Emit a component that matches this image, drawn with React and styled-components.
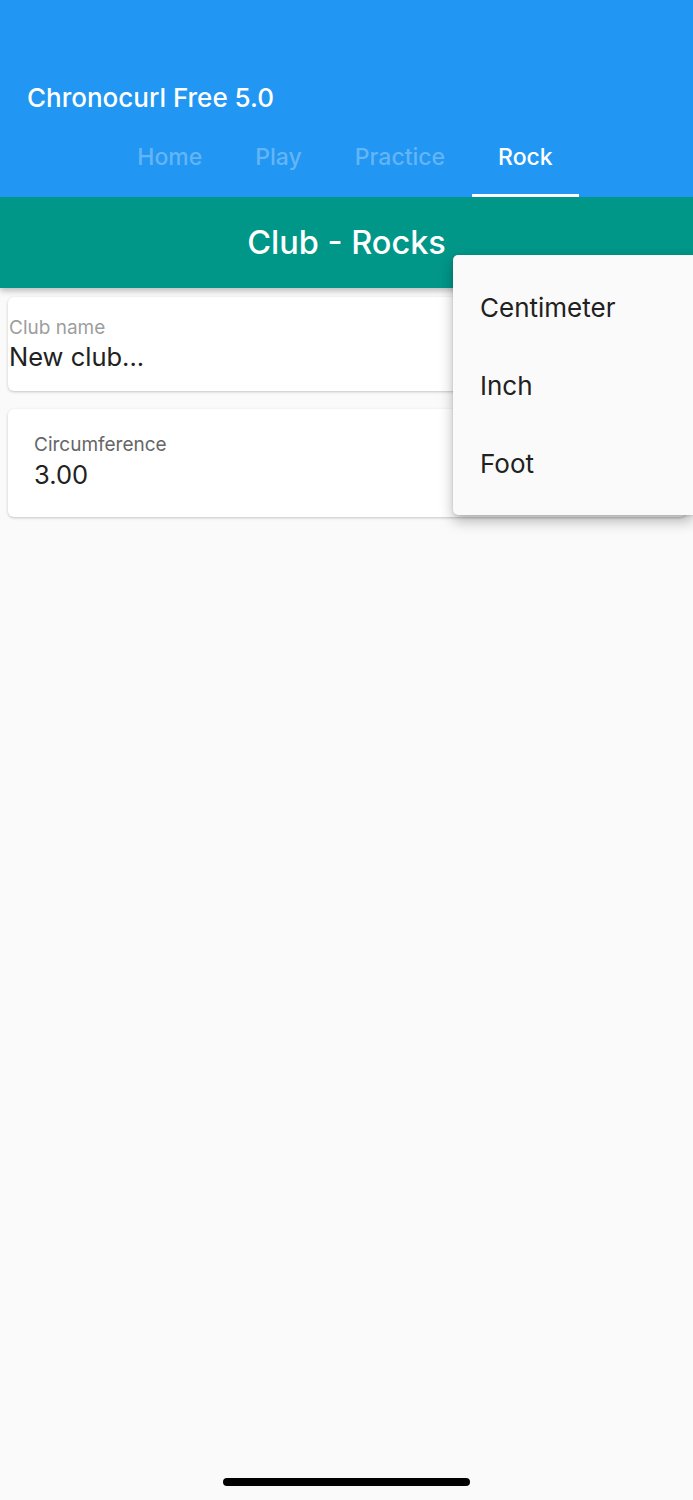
import React from 'react';
import styled, { createGlobalStyle } from 'styled-components';

const GlobalStyle = createGlobalStyle`
	html, body {
		margin: 0;
		padding: 0;
		background: #fafafa;
	}
	body {
		font-family: Inter, 'Noto Sans', sans-serif;
		-webkit-font-smoothing: antialiased;
	}
`;

const tabs = ['Home', 'Play', 'Practice', 'Rock'];
const units = ['Centimeter', 'Inch', 'Foot'];

const Screen = styled.div`
	position: relative;
	width: 693px;
	height: 1500px;
	overflow: hidden;
	background: #fafafa;
	display: flex;
	flex-direction: column;
`;

const AppBar = styled.header`
	background: #2196f3;
	padding-top: 74px;
	display: flex;
	flex-direction: column;
	position: relative;
	z-index: 2;
`;

const Title = styled.div`
	height: 46px;
	display: flex;
	align-items: center;
	padding-left: 27px;
	color: #fff;
	font-size: 26px;
	font-weight: 500;
`;

const TabRow = styled.nav`
	height: 77px;
	display: flex;
	justify-content: center;
	padding-right: 3px;
`;

const Tab = styled.div`
	padding: 0 26.5px;
	display: flex;
	align-items: center;
	justify-content: center;
	font-size: 23px;
	font-weight: 500;
	color: ${(p) => (p.$active ? '#fff' : '#64b5f6')};
	border-bottom: 3px solid ${(p) => (p.$active ? '#fff' : 'transparent')};
	box-sizing: border-box;
`;

const SectionBar = styled.div`
	height: 91px;
	background: #009688;
	display: flex;
	align-items: center;
	justify-content: center;
	color: #fff;
	font-size: 32.5px;
	font-weight: 500;
	box-shadow: 0 3px 6px rgba(0, 0, 0, 0.25);
	position: relative;
	z-index: 1;
`;

const Content = styled.main`
	display: flex;
	flex-direction: column;
	gap: 18px;
	padding: 9px 7px 0 8px;
`;

const Card = styled.div`
	background: #fff;
	border-radius: 6px;
	box-shadow: 0 1px 3px rgba(0, 0, 0, 0.22);
	height: ${(p) => p.$height}px;
	box-sizing: border-box;
	padding: ${(p) => p.$pad};
	display: flex;
	flex-direction: column;
`;

const Label = styled.div`
	font-size: 19px;
	color: ${(p) => p.$color};
	line-height: 24px;
`;

const Value = styled.div`
	font-size: ${(p) => p.$size}px;
	color: #212121;
	line-height: 30px;
	margin-top: ${(p) => p.$gap}px;
`;

const Menu = styled.div`
	position: absolute;
	left: 453px;
	top: 255px;
	width: 240px;
	padding: 13px 0;
	background: #fafafa;
	border-radius: 5px 0 0 5px;
	box-shadow: 0 6px 14px rgba(0, 0, 0, 0.28), 0 1px 3px rgba(0, 0, 0, 0.12);
	z-index: 5;
`;

const MenuItem = styled.div`
	height: 78px;
	display: flex;
	align-items: center;
	padding-left: 27px;
	font-size: 26px;
	color: #212121;
`;

const HomeIndicator = styled.div`
	position: absolute;
	left: 223px;
	top: 1478px;
	width: 247px;
	height: 8px;
	border-radius: 4px;
	background: #000;
`;

export default function App() {
	return (
		<>
			<GlobalStyle />
			<Screen>
				<AppBar>
					<Title>Chronocurl Free 5.0</Title>
					<TabRow>
						{tabs.map((t) => (
							<Tab key={t} $active={t === 'Rock'}>
								{t}
							</Tab>
						))}
					</TabRow>
				</AppBar>
				<SectionBar>Club - Rocks</SectionBar>
				<Content>
					<Card $height={94} $pad="19px 1px 0 1px">
						<Label $color="#9e9e9e">Club name</Label>
						<Value $size={25.5} $gap={2}>New club...</Value>
					</Card>
					<Card $height={108} $pad="24px 26px 0">
						<Label $color="#666">Circumference</Label>
						<Value $size={25.5} $gap={3}>3.00</Value>
					</Card>
				</Content>
				<Menu>
					{units.map((u) => (
						<MenuItem key={u}>{u}</MenuItem>
					))}
				</Menu>
				<HomeIndicator />
			</Screen>
		</>
	);
}
